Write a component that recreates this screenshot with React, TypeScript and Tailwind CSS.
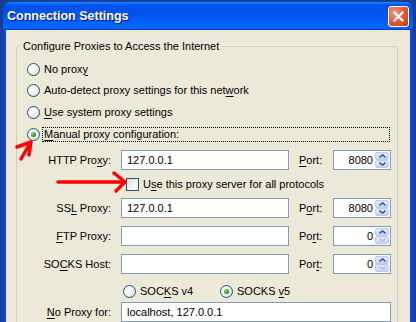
import React from "react";

function Key({ t, k }: { t: string; k: number }) {
  return (
    <>
      {t.slice(0, k)}
      <span className="underline underline-offset-[2px]">{t[k]}</span>
      {t.slice(k + 1)}
    </>
  );
}

function Radio({ checked = false }: { checked?: boolean }) {
  return (
    <span className="flex h-[13px] w-[13px] shrink-0 items-center justify-center rounded-full border border-[#1C5180] bg-[radial-gradient(circle_at_35%_35%,#ffffff_0%,#F4F3EE_45%,#D6D5CC_100%)]">
      {checked && (
        <span className="h-[5px] w-[5px] rounded-full bg-[radial-gradient(circle_at_35%_35%,#7DE27D_0%,#21A121_60%,#0E7A0E_100%)]" />
      )}
    </span>
  );
}

function Checkbox() {
  return (
    <span className="h-[13px] w-[13px] shrink-0 border border-[#1C5180] bg-[linear-gradient(135deg,#DCDCD7_0%,#F4F4F0_60%,#ffffff_100%)]" />
  );
}

function Arrow({ up, disabled }: { up?: boolean; disabled?: boolean }) {
  const c = disabled ? "#B9C3D8" : "#4D6185";
  return (
    <span className="flex flex-1 items-center justify-center rounded-[2px] border border-[#B7CAF5] bg-[linear-gradient(to_bottom,#E2EAFD_0%,#C6D5F9_100%)]">
      <svg width="7" height="4" viewBox="0 0 7 4">
        <path
          d={up ? "M0.5 3.5 L3.5 0.8 L6.5 3.5" : "M0.5 0.5 L3.5 3.2 L6.5 0.5"}
          fill="none"
          stroke={c}
          strokeWidth="1.6"
        />
      </svg>
    </span>
  );
}

function Spin({ value, downOff }: { value: string; downOff?: boolean }) {
  return (
    <div className="flex h-[20px] w-[58px] border border-[#7F9DB9] bg-white p-[1px]">
      <span className="flex-1 pr-[2px] text-right leading-[16px]">{value}</span>
      <div className="flex w-[14px] flex-col">
        <Arrow up />
        <Arrow disabled={downOff} />
      </div>
    </div>
  );
}

function TextBox({ value = "", w }: { value?: string; w: string }) {
  return (
    <div className={`h-[20px] ${w} border border-[#7F9DB9] bg-white pl-[5px] leading-[18px]`}>
      {value}
    </div>
  );
}

function ProxyRow({
  label,
  k,
  value,
  portKey,
  port,
  downOff,
  mt,
}: {
  label: string;
  k: number;
  value?: string;
  portKey: number;
  port: string;
  downOff?: boolean;
  mt: string;
}) {
  return (
    <div className={`flex items-center ${mt}`}>
      <span className="w-[94px] text-right">
        <Key t={label} k={k} />
      </span>
      <div className="ml-[10px]">
        <TextBox value={value} w="w-[168px]" />
      </div>
      <span className="ml-[10px] w-[34px]">
        <Key t="Port:" k={portKey} />
      </span>
      <Spin value={port} downOff={downOff} />
    </div>
  );
}

export default function App() {
  return (
    <div className="relative h-[322px] w-[416px] overflow-hidden bg-[#1B3C92] pl-[3px] pt-[2px] font-['Liberation_Sans',Arial,sans-serif] text-[11px] text-black">
      <div className="flex w-[410px] flex-col">
        {/* title bar */}
        <div className="flex h-[28px] items-center justify-between rounded-t-[7px] bg-[linear-gradient(to_bottom,#0997FF_0%,#0053EE_10%,#0050EE_40%,#0066FF_85%,#0066FF_92%,#005BFF_95%,#003DD7_97%,#003DD7_100%)] pl-[4px] pr-[4px]">
          <span className="text-[12.5px] font-bold text-white [text-shadow:1px_1px_#0A1883]">
            Connection Settings
          </span>
          <span className="flex h-[21px] w-[21px] items-center justify-center rounded-[3px] border border-white bg-[radial-gradient(circle_at_30%_30%,#F19A80_0%,#E2603F_45%,#C2380E_100%)]">
            <svg width="11" height="11" viewBox="0 0 11 11">
              <path d="M1.5 1.5 L9.5 9.5 M9.5 1.5 L1.5 9.5" stroke="#fff" strokeWidth="2.2" strokeLinecap="square" />
            </svg>
          </span>
        </div>

        {/* body */}
        <div className="h-[300px] border-x-[3px] border-[#0A48D6] bg-[#ECE9D8]">
          <fieldset className="mt-[10px] ml-[10px] w-[382px] rounded-[3px] border border-[#D0D0BF] pb-[20px]">
            <legend className="ml-[3px] px-[3px] leading-[13px]">
              Configure Proxies to Access the Internet
            </legend>

            <div className="flex flex-col pt-[5px] pl-[10px] pr-[7px]">
              <div className="flex h-[22px] items-center gap-[4px]">
                <Radio />
                <span>
                  <Key t="No proxy" k={7} />
                </span>
              </div>
              <div className="flex h-[21px] items-center gap-[4px]">
                <Radio />
                <span>
                  <Key t="Auto-detect proxy settings for this network" k={39} />
                </span>
              </div>
              <div className="flex h-[22px] items-center gap-[4px]">
                <Radio />
                <span>
                  <Key t="Use system proxy settings" k={0} />
                </span>
              </div>
              <div className="flex h-[22px] items-center gap-[2px]">
                <Radio checked />
                <span className="h-[15px] flex-1 border border-dotted border-black pl-[1px] leading-[13px]">
                  <Key t="Manual proxy configuration:" k={0} />
                </span>
              </div>
            </div>

            <div className="flex flex-col">
              <ProxyRow label="HTTP Proxy:" k={8} value="127.0.0.1" portKey={0} port="8080" mt="mt-[5px]" />
              <div className="flex h-[28px] items-center gap-[4px] pl-[109px]">
                <Checkbox />
                <span>
                  <Key t="Use this proxy server for all protocols" k={1} />
                </span>
              </div>
              <ProxyRow label="SSL Proxy:" k={2} value="127.0.0.1" portKey={1} port="8080" mt="mt-0" />
              <ProxyRow label="FTP Proxy:" k={0} portKey={2} port="0" downOff mt="mt-[8px]" />
              <ProxyRow label="SOCKS Host:" k={2} portKey={3} port="0" downOff mt="mt-[8px]" />

              <div className="mt-[7px] flex h-[20px] items-center pl-[106px]">
                <div className="flex w-[97px] items-center gap-[4px]">
                  <Radio />
                  <span>
                    <Key t="SOCKS v4" k={3} />
                  </span>
                </div>
                <div className="flex items-center gap-[4px]">
                  <Radio checked />
                  <span>
                    <Key t="SOCKS v5" k={6} />
                  </span>
                </div>
              </div>

              <div className="mt-[1px] flex items-center">
                <span className="w-[94px] text-right">
                  <Key t="No Proxy for:" k={0} />
                </span>
                <div className="ml-[10px]">
                  <TextBox value="localhost, 127.0.0.1" w="w-[270px]" />
                </div>
              </div>
            </div>
          </fieldset>
        </div>
      </div>

      {/* red annotation arrows */}
      <svg className="pointer-events-none absolute left-0 top-0" width="416" height="322" viewBox="0 0 416 322">
        <g fill="none" stroke="#FF0000" strokeWidth="3.5" strokeLinecap="round" strokeLinejoin="round">
          <path d="M21 159 L29 145" />
          <path d="M17 147 L31 142 L29 155" />
          <path d="M58 182 L123 182" />
          <path d="M114 173 L125 182 L116 191" />
        </g>
      </svg>
    </div>
  );
}
